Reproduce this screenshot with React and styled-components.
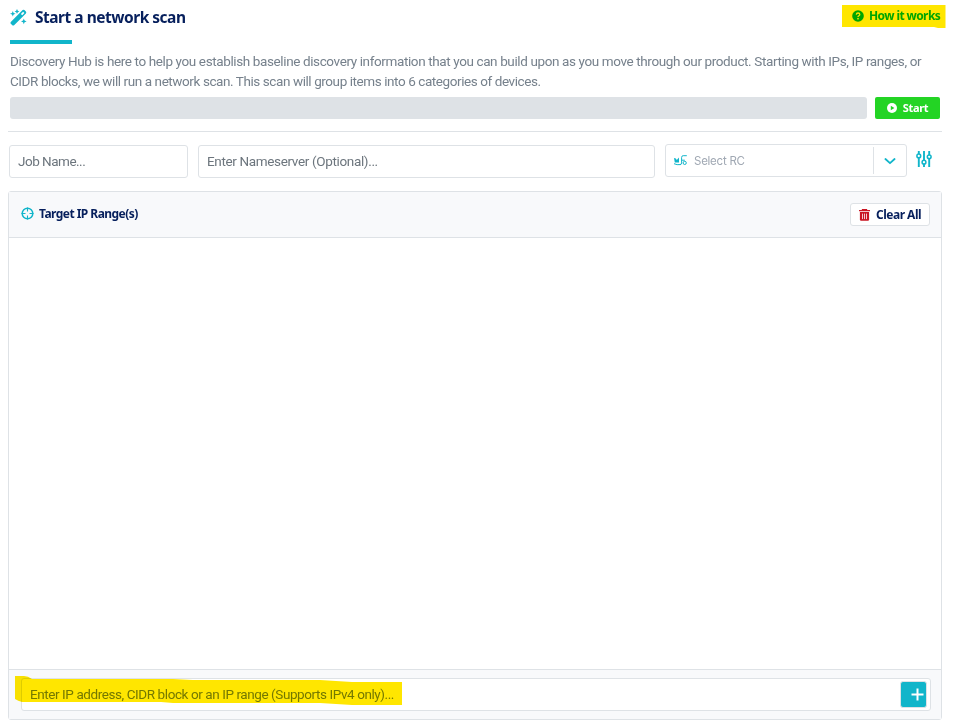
import React from "react";
import styled, { createGlobalStyle } from "styled-components";

const teal = "#11b5ca";
const navy = "#061f5c";
const line = "#dee2e6";

const GlobalStyle = createGlobalStyle`
  * { box-sizing: border-box; }
  body { margin: 0; background: #fff; font-family: Roboto, "Liberation Sans", sans-serif; }
  button, input { font: inherit; margin: 0; }
  svg { display: block; flex: none; }
`;

const Page = styled.main`
  width: 964px;
  height: 724px;
  padding: 0 22px 0 8px;
  display: flex;
  flex-direction: column;
  overflow: hidden;
`;
const TopBar = styled.header`
  height: 40px;
  display: flex;
  justify-content: space-between;
  padding: 4px 0 0 2px;
`;
const Title = styled.h1`
  margin: 0;
  height: 26px;
  display: flex;
  align-items: center;
  gap: 8px;
  font: 700 15.5px/26px "Noto Sans", sans-serif;
  letter-spacing: -0.49px;
  color: ${navy};
  white-space: nowrap;
`;
const HelpLink = styled.button`
  position: relative;
  width: 105px;
  height: 24px;
  margin-right: -5px;
  padding: 0 0 0 10px;
  border: 0;
  background: transparent;
  display: flex;
  align-items: center;
  gap: 5px;
  color: #00b81c;
  font: 700 12px/24px "Noto Sans", sans-serif;
  letter-spacing: -0.6px;
  white-space: nowrap;
`;
const Marker = styled.svg`
  position: absolute;
  left: ${(p) => p.$x}px;
  top: ${(p) => p.$y}px;
  mix-blend-mode: multiply;
  pointer-events: none;
`;
const Accent = styled.div`
  width: 62px;
  height: 4px;
  margin-left: 2px;
  background: ${teal};
`;
const Intro = styled.p`
  margin: 7px 0 6px 2px;
  font-size: 13.5px;
  line-height: 20px;
  color: #76818c;
  white-space: nowrap;
`;
const IntroLine = styled.span`
  display: block;
  letter-spacing: ${(p) => p.$track}px;
`;
const ProgressRow = styled.div`
  height: 22px;
  display: flex;
  gap: 8px;
  padding: 0 2px;
`;
const Track = styled.div`
  flex: 1;
  border-radius: 3px;
  background: #dee2e6;
`;
const StartButton = styled.button`
  width: 65px;
  padding: 0;
  border: 0;
  border-radius: 2px;
  background: #23d424;
  color: #fff;
  display: flex;
  align-items: center;
  justify-content: center;
  gap: 6px;
  font: 700 11px/22px "Noto Sans", sans-serif;
  letter-spacing: -0.3px;
`;
const Rule = styled.hr`
  width: 100%;
  height: 1px;
  margin: 12px 0 12px;
  border: 0;
  background: ${line};
`;
const Filters = styled.div`
  height: 34px;
  display: flex;
  padding-left: 1px;
`;
const TextField = styled.input`
  width: ${(p) => p.$width}px;
  height: 33px;
  margin: 1px 10px 0 0;
  padding: 0 8px 1px;
  border: 1px solid ${line};
  border-radius: 3px;
  outline: 0;
  background: #fff;
  font-size: 13.5px;
  letter-spacing: ${(p) => p.$track}px;
  &::placeholder { color: #6c757d; opacity: 1; }
`;
const Select = styled.div`
  width: 242px;
  height: 33px;
  border: 1px solid ${line};
  border-radius: 3px;
  display: flex;
  align-items: center;
  padding-left: 8px;
`;
const SelectLabel = styled.span`
  flex: 1;
  margin-left: 7px;
  font: 11.5px/20px Inter, sans-serif;
  letter-spacing: -0.25px;
  color: #a0a8b3;
`;
const Chevron = styled.span`
  width: 33px;
  height: 27px;
  border-left: 1px solid ${line};
  display: grid;
  place-items: center;
`;
const SettingsButton = styled.button`
  width: 16px;
  height: 18px;
  margin: 6px 0 0 9px;
  padding: 0;
  border: 0;
  background: none;
`;
const Panel = styled.section`
  height: 529px;
  margin-top: 13px;
  border: 1px solid ${line};
  border-radius: 3px;
  display: flex;
  flex-direction: column;
`;
const PanelHeader = styled.div`
  height: 46px;
  padding: 0 11px 0 12px;
  border-bottom: 1px solid ${line};
  background: #f8f9fb;
  display: flex;
  align-items: center;
  justify-content: space-between;
`;
const PanelTitle = styled.h2`
  margin: 0 0 2px;
  display: flex;
  align-items: center;
  gap: 5px;
  font: 700 12px/20px "Noto Sans", sans-serif;
  letter-spacing: -0.54px;
  color: ${navy};
`;
const ClearButton = styled.button`
  width: 80px;
  height: 23px;
  padding: 0 0 0 8px;
  border: 1px solid ${line};
  border-radius: 3px;
  background: #fff;
  display: flex;
  align-items: center;
  gap: 6px;
  font: 700 12px/21px "Noto Sans", sans-serif;
  letter-spacing: -0.5px;
  color: ${navy};
  white-space: nowrap;
`;
const RangeList = styled.div`
  flex: 1;
`;
const PanelFooter = styled.div`
  position: relative;
  height: 50px;
  padding: 8px 10px 8px 12px;
  border-top: 1px solid ${line};
  background: #f8f9fb;
`;
const AddRow = styled.div`
  height: 33px;
  border: 1px solid ${line};
  border-radius: 3px;
  background: #fff;
  display: flex;
  align-items: center;
  padding: 0 3px 0 8px;
`;
const RangeInput = styled.input`
  flex: 1;
  min-width: 0;
  height: 30px;
  padding: 0 0 1px;
  border: 0;
  outline: 0;
  background: transparent;
  font-size: 13.5px;
  letter-spacing: -0.42px;
  &::placeholder { color: #74867d; opacity: 1; }
`;
const AddButton = styled.button`
  width: 27px;
  height: 27px;
  padding: 0 0 0 7px;
  border: 1px solid ${line};
  border-radius: 3px;
  background: ${teal};
  display: grid;
  place-items: center;
`;

const WandIcon = () => (
  <svg width="17" height="17" viewBox="0 0 17 17" fill={teal}>
    <path fillRule="evenodd" d="M.8 12.9 12.6 1.1q.9-.8 1.8 0l1.5 1.5q.8.9 0 1.8L4.1 16.2q-.9.8-1.8 0L.8 14.7q-.8-.9 0-1.8ZM10.9 5l1.3 1.3 2.2-2.2-1.3-1.3Z" />
    <path d="m7 0 .8 1.7 1.6.7-1.6.8L7 4.8l-.8-1.6-1.6-.8 1.6-.7ZM2.8 2l.8 2 2 .8-2 .8-.8 2-.8-2-2-.8 2-.8ZM13.8 9.6l.8 2 2 .8-2 .8-.8 2-.8-2-2-.8 2-.8Z" />
  </svg>
);
const HelpIcon = () => (
  <svg width="12" height="12" viewBox="0 0 12 12">
    <circle cx="6" cy="6" r="5.8" fill="#00b81c" />
    <path d="M4.3 4.6Q4.5 3 6 3q1.8 0 1.8 1.4 0 .8-.9 1.3Q6 6.2 6 7" fill="none" stroke="#fff" strokeWidth="1.3" />
    <circle cx="6" cy="8.7" r=".85" fill="#fff" />
  </svg>
);
const PlayIcon = () => (
  <svg width="10" height="10" viewBox="0 0 10 10">
    <circle cx="5" cy="5" r="5" fill="#fff" />
    <path d="M3.8 2.7 7.4 5 3.8 7.3Z" fill="#23d424" />
  </svg>
);
const CollectorIcon = () => (
  <svg width="13" height="12" viewBox="0 0 13 12" fill="none" stroke={teal}>
    <path d="m0 3 1.8.4 1 1.5L5 2.4v5.2H.8Z" fill={teal} stroke="none" />
    <path d="M0 8.7q3 1.4 6.5.9" strokeWidth="1" />
    <path d="M12.8.7H9.2Q7.6.7 7.6 2.4v5.5q0 1.7-1.6 1.7M7.6 5.2h3.2" strokeWidth="1" />
    <circle cx="10.7" cy="7.9" r="1.6" />
  </svg>
);
const SlidersIcon = () => (
  <svg width="16" height="17" viewBox="0 0 16 17" fill="none" stroke={teal} strokeWidth="1.9">
    <path d="M2.8 0v3M2.8 6.5V16M8 0v9.5M8 13v3M13.2 0v4.2M13.2 7.7V16" />
    <circle cx="2.8" cy="4.9" r="1.9" fill="#fff" strokeWidth="1.5" />
    <circle cx="8" cy="11.2" r="1.9" fill="#fff" strokeWidth="1.5" />
    <circle cx="13.2" cy="5.8" r="1.9" fill="#fff" strokeWidth="1.5" />
  </svg>
);
const TargetIcon = () => (
  <svg width="13" height="13" viewBox="0 0 13 13" fill="none" stroke={teal}>
    <circle cx="6.5" cy="6.5" r="5.3" strokeWidth="1.5" />
    <path d="M6.5 .5v4M6.5 8.5v4M.5 6.5h4M8.5 6.5h4" strokeWidth="1.1" />
  </svg>
);
const TrashIcon = () => (
  <svg width="11" height="12" viewBox="0 0 11 12" fill="none">
    <path d="M3.5 1V.5h4V1M0 1.7h11" stroke="#c91422" strokeWidth="1.3" />
    <path d="M.9 3.1h9.2v7.5q0 1.2-1.2 1.2H2.1Q.9 11.8.9 10.6Z" fill="#c91422" />
    <path d="M3.5 4.6v5.5M5.5 4.6v5.5M7.5 4.6v5.5" stroke="#f6dde2" strokeWidth=".9" />
  </svg>
);

export default function App() {
  return (
    <>
      <GlobalStyle />
      <Page>
        <TopBar>
          <Title><WandIcon />Start a network scan</Title>
          <HelpLink>
            <HelpIcon />How it works
            <Marker $x={0} $y={0} width="105" height="25" viewBox="0 0 105 25">
              <path d="M0 1H103.5V24H96L92 23H0Z" fill="#ffe600" />
            </Marker>
          </HelpLink>
        </TopBar>
        <Accent />
        <Intro>
          <IntroLine $track={-0.383}>Discovery Hub is here to help you establish baseline discovery information that you can build upon as you move through our product. Starting with IPs, IP ranges, or</IntroLine>
          <IntroLine $track={-0.42}>CIDR blocks, we will run a network scan. This scan will group items into 6 categories of devices.</IntroLine>
        </Intro>
        <ProgressRow>
          <Track />
          <StartButton><PlayIcon />Start</StartButton>
        </ProgressRow>
        <Rule />
        <Filters>
          <TextField $width={179} $track={-0.5} placeholder="Job Name..." />
          <TextField $width={457} $track={-0.35} placeholder="Enter Nameserver (Optional)..." />
          <Select>
            <CollectorIcon />
            <SelectLabel>Select RC</SelectLabel>
            <Chevron>
              <svg width="12" height="8" viewBox="0 0 12 8" fill="none" stroke={teal} strokeWidth="1.8" strokeLinecap="round" strokeLinejoin="round"><path d="m1.4 2 4.6 4.2L10.6 2" /></svg>
            </Chevron>
          </Select>
          <SettingsButton aria-label="Settings"><SlidersIcon /></SettingsButton>
        </Filters>
        <Panel>
          <PanelHeader>
            <PanelTitle><TargetIcon />Target IP Range(s)</PanelTitle>
            <ClearButton><TrashIcon />Clear All</ClearButton>
          </PanelHeader>
          <RangeList />
          <PanelFooter>
            <AddRow>
              <RangeInput placeholder="Enter IP address, CIDR block or an IP range (Supports IPv4 only)..." />
              <AddButton aria-label="Add">
                <svg width="13" height="13" viewBox="0 0 13 13" stroke="#fff" strokeWidth="2"><path d="M6.5.5v12M.5 6.5h12" /></svg>
              </AddButton>
            </AddRow>
            <Marker $x={6} $y={6} width="388" height="31" viewBox="0 0 388 31">
              <path d="M0 0H9Q13 0 17 3H158L178 4H305L337 6H387V29H337L305 27H158L146 26H7Q3 25 0 23Z" fill="#ffe600" />
            </Marker>
          </PanelFooter>
        </Panel>
      </Page>
    </>
  );
}
